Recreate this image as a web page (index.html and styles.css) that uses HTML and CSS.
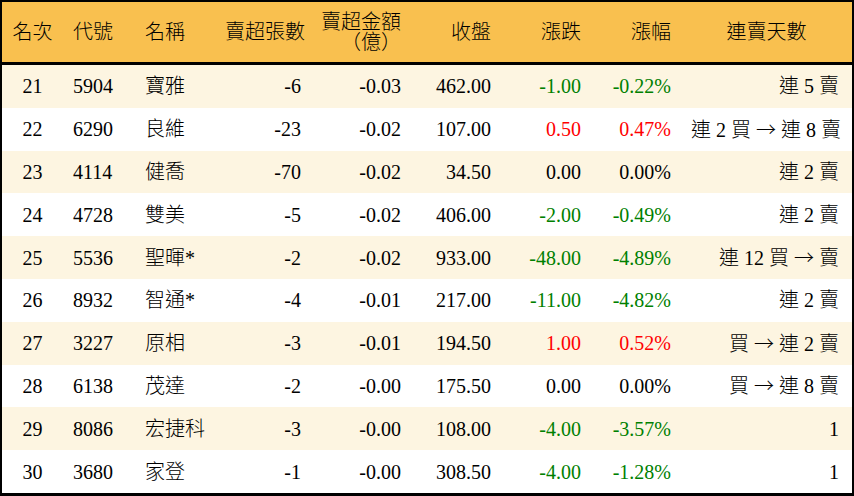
FILE: index.html
```html
<!DOCTYPE html>
<html lang="zh-Hant">
<head>
<meta charset="utf-8">
<title>賣超排行</title>
<link rel="stylesheet" href="styles.css">
</head>
<body>
<div class="board">
  <div class="row head">
    <div class="c c1">名次</div>
    <div class="c c2">代號</div>
    <div class="c c3">名稱</div>
    <div class="c r">賣超張數</div>
    <div class="c r two">賣超金額<br>（億）</div>
    <div class="c r">收盤</div>
    <div class="c r">漲跌</div>
    <div class="c r">漲幅</div>
    <div class="c c9h">連賣天數</div>
  </div>
  <div class="row odd">
    <div class="c c1">21</div><div class="c c2">5904</div><div class="c c3">寶雅</div>
    <div class="c r">-6</div><div class="c r">-0.03</div><div class="c r">462.00</div>
    <div class="c r dn">-1.00</div><div class="c r dn">-0.22%</div><div class="c r c9">連 5 賣</div>
  </div>
  <div class="row">
    <div class="c c1">22</div><div class="c c2">6290</div><div class="c c3">良維</div>
    <div class="c r">-23</div><div class="c r">-0.02</div><div class="c r">107.00</div>
    <div class="c r up">0.50</div><div class="c r up">0.47%</div><div class="c r c9">連 2 買 <span class="ar">→</span> 連 8 賣</div>
  </div>
  <div class="row odd">
    <div class="c c1">23</div><div class="c c2">4114</div><div class="c c3">健喬</div>
    <div class="c r">-70</div><div class="c r">-0.02</div><div class="c r">34.50</div>
    <div class="c r">0.00</div><div class="c r">0.00%</div><div class="c r c9">連 2 賣</div>
  </div>
  <div class="row">
    <div class="c c1">24</div><div class="c c2">4728</div><div class="c c3">雙美</div>
    <div class="c r">-5</div><div class="c r">-0.02</div><div class="c r">406.00</div>
    <div class="c r dn">-2.00</div><div class="c r dn">-0.49%</div><div class="c r c9">連 2 賣</div>
  </div>
  <div class="row odd">
    <div class="c c1">25</div><div class="c c2">5536</div><div class="c c3">聖暉*</div>
    <div class="c r">-2</div><div class="c r">-0.02</div><div class="c r">933.00</div>
    <div class="c r dn">-48.00</div><div class="c r dn">-4.89%</div><div class="c r c9">連 12 買 <span class="ar">→</span> 賣</div>
  </div>
  <div class="row">
    <div class="c c1">26</div><div class="c c2">8932</div><div class="c c3">智通*</div>
    <div class="c r">-4</div><div class="c r">-0.01</div><div class="c r">217.00</div>
    <div class="c r dn">-11.00</div><div class="c r dn">-4.82%</div><div class="c r c9">連 2 賣</div>
  </div>
  <div class="row odd">
    <div class="c c1">27</div><div class="c c2">3227</div><div class="c c3">原相</div>
    <div class="c r">-3</div><div class="c r">-0.01</div><div class="c r">194.50</div>
    <div class="c r up">1.00</div><div class="c r up">0.52%</div><div class="c r c9">買 <span class="ar">→</span> 連 2 賣</div>
  </div>
  <div class="row">
    <div class="c c1">28</div><div class="c c2">6138</div><div class="c c3">茂達</div>
    <div class="c r">-2</div><div class="c r">-0.00</div><div class="c r">175.50</div>
    <div class="c r">0.00</div><div class="c r">0.00%</div><div class="c r c9">買 <span class="ar">→</span> 連 8 賣</div>
  </div>
  <div class="row odd">
    <div class="c c1">29</div><div class="c c2">8086</div><div class="c c3">宏捷科</div>
    <div class="c r">-3</div><div class="c r">-0.00</div><div class="c r">108.00</div>
    <div class="c r dn">-4.00</div><div class="c r dn">-3.57%</div><div class="c r c9">1</div>
  </div>
  <div class="row">
    <div class="c c1">30</div><div class="c c2">3680</div><div class="c c3">家登</div>
    <div class="c r">-1</div><div class="c r">-0.00</div><div class="c r">308.50</div>
    <div class="c r dn">-4.00</div><div class="c r dn">-1.28%</div><div class="c r c9">1</div>
  </div>
</div>
</body>
</html>
```

FILE: styles.css
```css
html, body {
  margin: 0;
  padding: 0;
  background: #ffffff;
}

.board {
  width: 854px;
  height: 496px;
  box-sizing: border-box;
  border: 2px solid #000;
  border-bottom-width: 3px;
  font-family: "Liberation Serif", "Noto Sans CJK TC", serif;
  font-size: 20px;
  font-weight: 300;
  color: #000;
  background: #fff;
  overflow: hidden;
}

.row {
  display: grid;
  grid-template-columns: 61px 72px 80px 96px 100px 90px 90px 90px 171px;
  align-items: center;
  height: 42.8px;
  background: #ffffff;
}

.row.odd {
  background: #fdf5e1;
}

.row.head {
  height: 60px;
  background: #f9c04f;
  border-bottom: 3px solid #000;
}

.c {
  padding: 0 10px;
  white-space: nowrap;
  line-height: 20px;
}

.c1 {
  text-align: center;
}

.c2, .c3 {
  text-align: left;
}

.r {
  text-align: right;
}

.c9 {
  padding-right: 13px;
}

.c9h {
  text-align: center;
}

.two {
  line-height: 20px;
}

.ar {
  font-family: "Noto Sans CJK TC", sans-serif;
  font-weight: 300;
}

.dn {
  color: #008000;
}

.up {
  color: #ff0000;
}
```
